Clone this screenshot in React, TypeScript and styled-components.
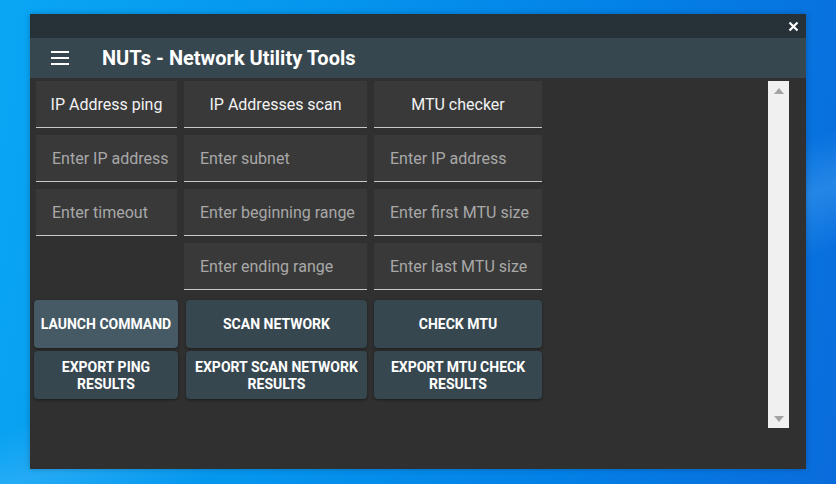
import React from "react";
import styled, { createGlobalStyle } from "styled-components";

const Global = createGlobalStyle`
  html, body { margin: 0; padding: 0; }
  body {
    width: 836px;
    height: 484px;
    overflow: hidden;
    font-family: Roboto, "Liberation Sans", sans-serif;
  }
  #root { width: 836px; height: 484px; }
`;

const Desktop = styled.div`
  width: 836px;
  height: 484px;
  box-sizing: border-box;
  padding: 14px 0 0 30px;
  background:
    linear-gradient(160deg, rgba(255,255,255,0) 55%, rgba(120,200,255,0.25) 62%, rgba(255,255,255,0) 70%),
    linear-gradient(100deg, #0aa6f4 0%, #0596ee 35%, #0380e6 70%, #0a6cdc 100%);
`;

const Window = styled.div`
  width: 776px;
  height: 455px;
  display: flex;
  flex-direction: column;
  background: #303030;
  box-shadow: 0 0 6px rgba(0, 0, 0, 0.25);
`;

const TitleBar = styled.div`
  height: 24px;
  flex: none;
  background: #263238;
  display: flex;
  justify-content: flex-end;
  align-items: center;
  padding-right: 7px;
`;

const CloseButton = styled.div`
  width: 12px;
  height: 12px;
  display: flex;
  align-items: center;
  justify-content: center;
`;

const Header = styled.header`
  height: 40px;
  flex: none;
  background: #37474f;
  display: flex;
  align-items: center;
  padding-left: 21px;
  gap: 33px;
`;

const Burger = styled.div`
  width: 18px;
  display: flex;
  flex-direction: column;
  gap: 4px;
  span {
    display: block;
    height: 2px;
    background: #ffffff;
  }
`;

const Title = styled.h1`
  margin: 0;
  font-size: 20px;
  font-weight: 700;
  color: #ffffff;
  letter-spacing: 0;
`;

const Body = styled.div`
  flex: 1;
  display: flex;
  justify-content: space-between;
  padding: 3px 17px 0 0;
`;

const Grid = styled.div`
  display: grid;
  grid-template-columns: 141px 183px 168px;
  column-gap: 7px;
  padding-left: 6px;
  align-content: start;
`;

const Column = styled.div`
  display: flex;
  flex-direction: column;
`;

const Field = styled.div<{ $center?: boolean; $empty?: boolean }>`
  height: 47px;
  box-sizing: border-box;
  margin-bottom: 7px;
  background: ${(p) => (p.$empty ? "transparent" : "#393939")};
  border-bottom: ${(p) => (p.$empty ? "none" : "1px solid #c8c8c8")};
  display: flex;
  align-items: center;
  justify-content: ${(p) => (p.$center ? "center" : "flex-start")};
  padding: ${(p) => (p.$center ? "1px 0 0" : "1px 0 0 16px")};
  font-size: 16px;
  color: ${(p) => (p.$center ? "#f2f2f2" : "#a8a8a8")};
  white-space: nowrap;
`;

const Buttons = styled.div`
  display: flex;
  flex-direction: column;
  gap: 3px;
  margin-top: 3px;
`;

const Button = styled.button<{ $hover?: boolean; $ml?: number; $mr?: number }>`
  height: 48px;
  margin: 0 ${(p) => p.$mr ?? 0}px 0 ${(p) => p.$ml ?? 0}px;
  border: none;
  border-radius: 4px;
  background: ${(p) => (p.$hover ? "#455a64" : "#37474f")};
  box-shadow: 0 1px 3px rgba(0, 0, 0, 0.45);
  color: #ffffff;
  font-family: Roboto, "Liberation Sans", sans-serif;
  font-size: 14px;
  font-weight: 700;
  line-height: 17px;
  text-transform: uppercase;
  padding: 1px 4px 0;
  text-align: center;
`;

const Scrollbar = styled.div`
  width: 21px;
  height: 347px;
  background: #f0f0f0;
  display: flex;
  flex-direction: column;
  justify-content: space-between;
  align-items: center;
  padding: 7px 0 6px;
  box-sizing: border-box;
`;

const Arrow = styled.div<{ $down?: boolean }>`
  width: 0;
  height: 0;
  border-left: 5px solid transparent;
  border-right: 5px solid transparent;
  ${(p) =>
    p.$down
      ? "border-top: 6px solid #a3a3a3;"
      : "border-bottom: 6px solid #a3a3a3;"}
`;

const cols = [
  {
    head: "IP Address ping",
    fields: ["Enter IP address", "Enter timeout", ""],
    btns: ["Launch command", "Export ping results"],
    ml: -2,
    mr: -1,
    hover: true,
  },
  {
    head: "IP Addresses scan",
    fields: ["Enter subnet", "Enter beginning range", "Enter ending range"],
    btns: ["Scan network", "Export scan network results"],
    ml: 2,
    mr: 0,
  },
  {
    head: "MTU checker",
    fields: ["Enter IP address", "Enter first MTU size", "Enter last MTU size"],
    btns: ["Check MTU", "Export MTU check results"],
    ml: 0,
    mr: 0,
  },
];

export default function App() {
  return (
    <>
      <Global />
      <Desktop>
        <Window>
          <TitleBar>
            <CloseButton>
              <svg width="11" height="11" viewBox="0 0 11 11">
                <path d="M1.5 1.5 L9.5 9.5 M9.5 1.5 L1.5 9.5" stroke="#fff" strokeWidth="2.2" />
              </svg>
            </CloseButton>
          </TitleBar>
          <Header>
            <Burger>
              <span />
              <span />
              <span />
            </Burger>
            <Title>NUTs - Network Utility Tools</Title>
          </Header>
          <Body>
            <Grid>
              {cols.map((c) => (
                <Column key={c.head}>
                  <Field $center>{c.head}</Field>
                  {c.fields.map((f, i) => (
                    <Field key={i} $empty={!f}>
                      {f}
                    </Field>
                  ))}
                  <Buttons>
                    {c.btns.map((b, i) => (
                      <Button key={b} $hover={c.hover && i === 0} $ml={c.ml} $mr={c.mr}>
                        {b}
                      </Button>
                    ))}
                  </Buttons>
                </Column>
              ))}
            </Grid>
            <Scrollbar>
              <Arrow />
              <Arrow $down />
            </Scrollbar>
          </Body>
        </Window>
      </Desktop>
    </>
  );
}
